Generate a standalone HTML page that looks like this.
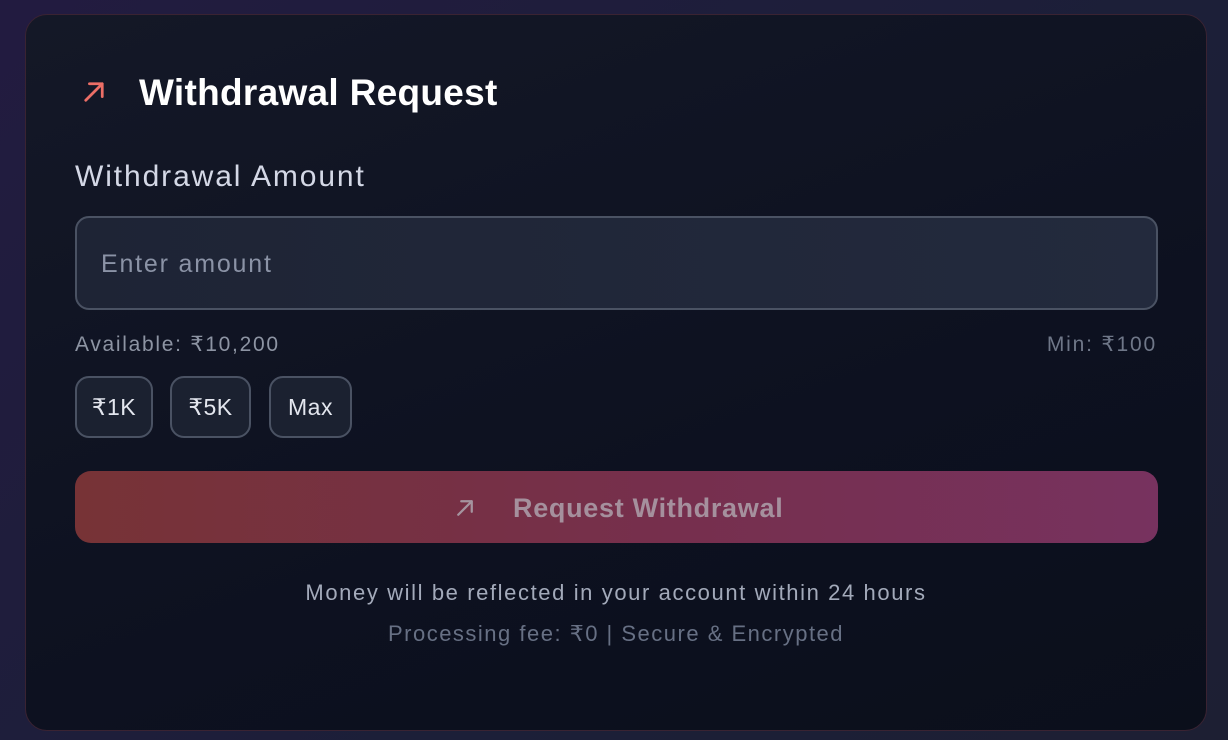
<!DOCTYPE html>
<html><head><meta charset="utf-8"><style>
*{margin:0;padding:0;box-sizing:border-box}
body{width:1228px;height:740px;overflow:hidden;background:linear-gradient(135deg,#221b40,#1c1f38 60%,#1d1f33);font-family:"Liberation Sans","DejaVu Sans",sans-serif;position:relative}
.card{position:absolute;left:25px;top:14px;width:1182px;height:717px;border-radius:22px;background:linear-gradient(160deg,#141827,#0d1120 60%,#0b0f1b);border:1px solid #3a2332}
.a{position:absolute;white-space:nowrap}
.chip{position:absolute;top:376px;height:62px;border:2px solid #4a5263;border-radius:14px;background:#1b2130;color:#e3e6ee;font-size:23px;letter-spacing:0.5px;display:flex;align-items:center;justify-content:center}
</style></head><body>
<div class="card"></div>
<svg class="a" style="left:83px;top:81px" width="22" height="22" viewBox="0 0 24 24" fill="none" stroke="#ec6e66" stroke-width="3" stroke-linecap="round" stroke-linejoin="round"><path d="M3 21L21 3M7 3h14v14"/></svg>
<div class="a" style="left:139px;top:72px;font-size:37px;font-weight:bold;color:#fff;letter-spacing:0.3px">Withdrawal Request</div>
<div class="a" style="left:75px;top:160px;font-size:30px;color:#d4d8e6;letter-spacing:1.9px">Withdrawal Amount</div>
<div class="a" style="left:75px;top:216px;width:1083px;height:94px;border:2px solid #4a5263;border-radius:14px;background:linear-gradient(90deg,#1e2435,#232a3d)"></div>
<div class="a" style="left:101px;top:250px;font-size:25px;color:#8b93a6;letter-spacing:1.8px">Enter amount</div>
<div class="a" style="left:75px;top:332px;font-size:21px;color:#8d94a3;letter-spacing:1.7px">Available: ₹10,200</div>
<div class="a" style="right:71px;top:332px;font-size:21px;color:#6f7788;letter-spacing:1.8px">Min: ₹100</div>
<div class="chip" style="left:75px;width:78px">₹1K</div>
<div class="chip" style="left:170px;width:81px">₹5K</div>
<div class="chip" style="left:269px;width:83px">Max</div>
<div class="a" style="left:75px;top:471px;width:1083px;height:72px;border-radius:16px;background:linear-gradient(90deg,#773336,#762f4d 55%,#77325f)"></div>
<svg class="a" style="left:456px;top:499px" width="18" height="18" viewBox="0 0 24 24" fill="none" stroke="#a5949f" stroke-width="3" stroke-linecap="round" stroke-linejoin="round"><path d="M3 21L21 3M7 3h14v14"/></svg>
<div class="a" style="left:513px;top:493px;font-size:27px;font-weight:bold;color:#a5909d;letter-spacing:0.7px">Request Withdrawal</div>
<div class="a" style="left:0;width:1232px;text-align:center;top:580px;font-size:22px;color:#a3aaba;letter-spacing:1.6px">Money will be reflected in your account within 24 hours</div>
<div class="a" style="left:0;width:1232px;text-align:center;top:621px;font-size:22px;color:#677084;letter-spacing:1.5px">Processing fee: ₹0 | Secure &amp; Encrypted</div>
</body></html>
